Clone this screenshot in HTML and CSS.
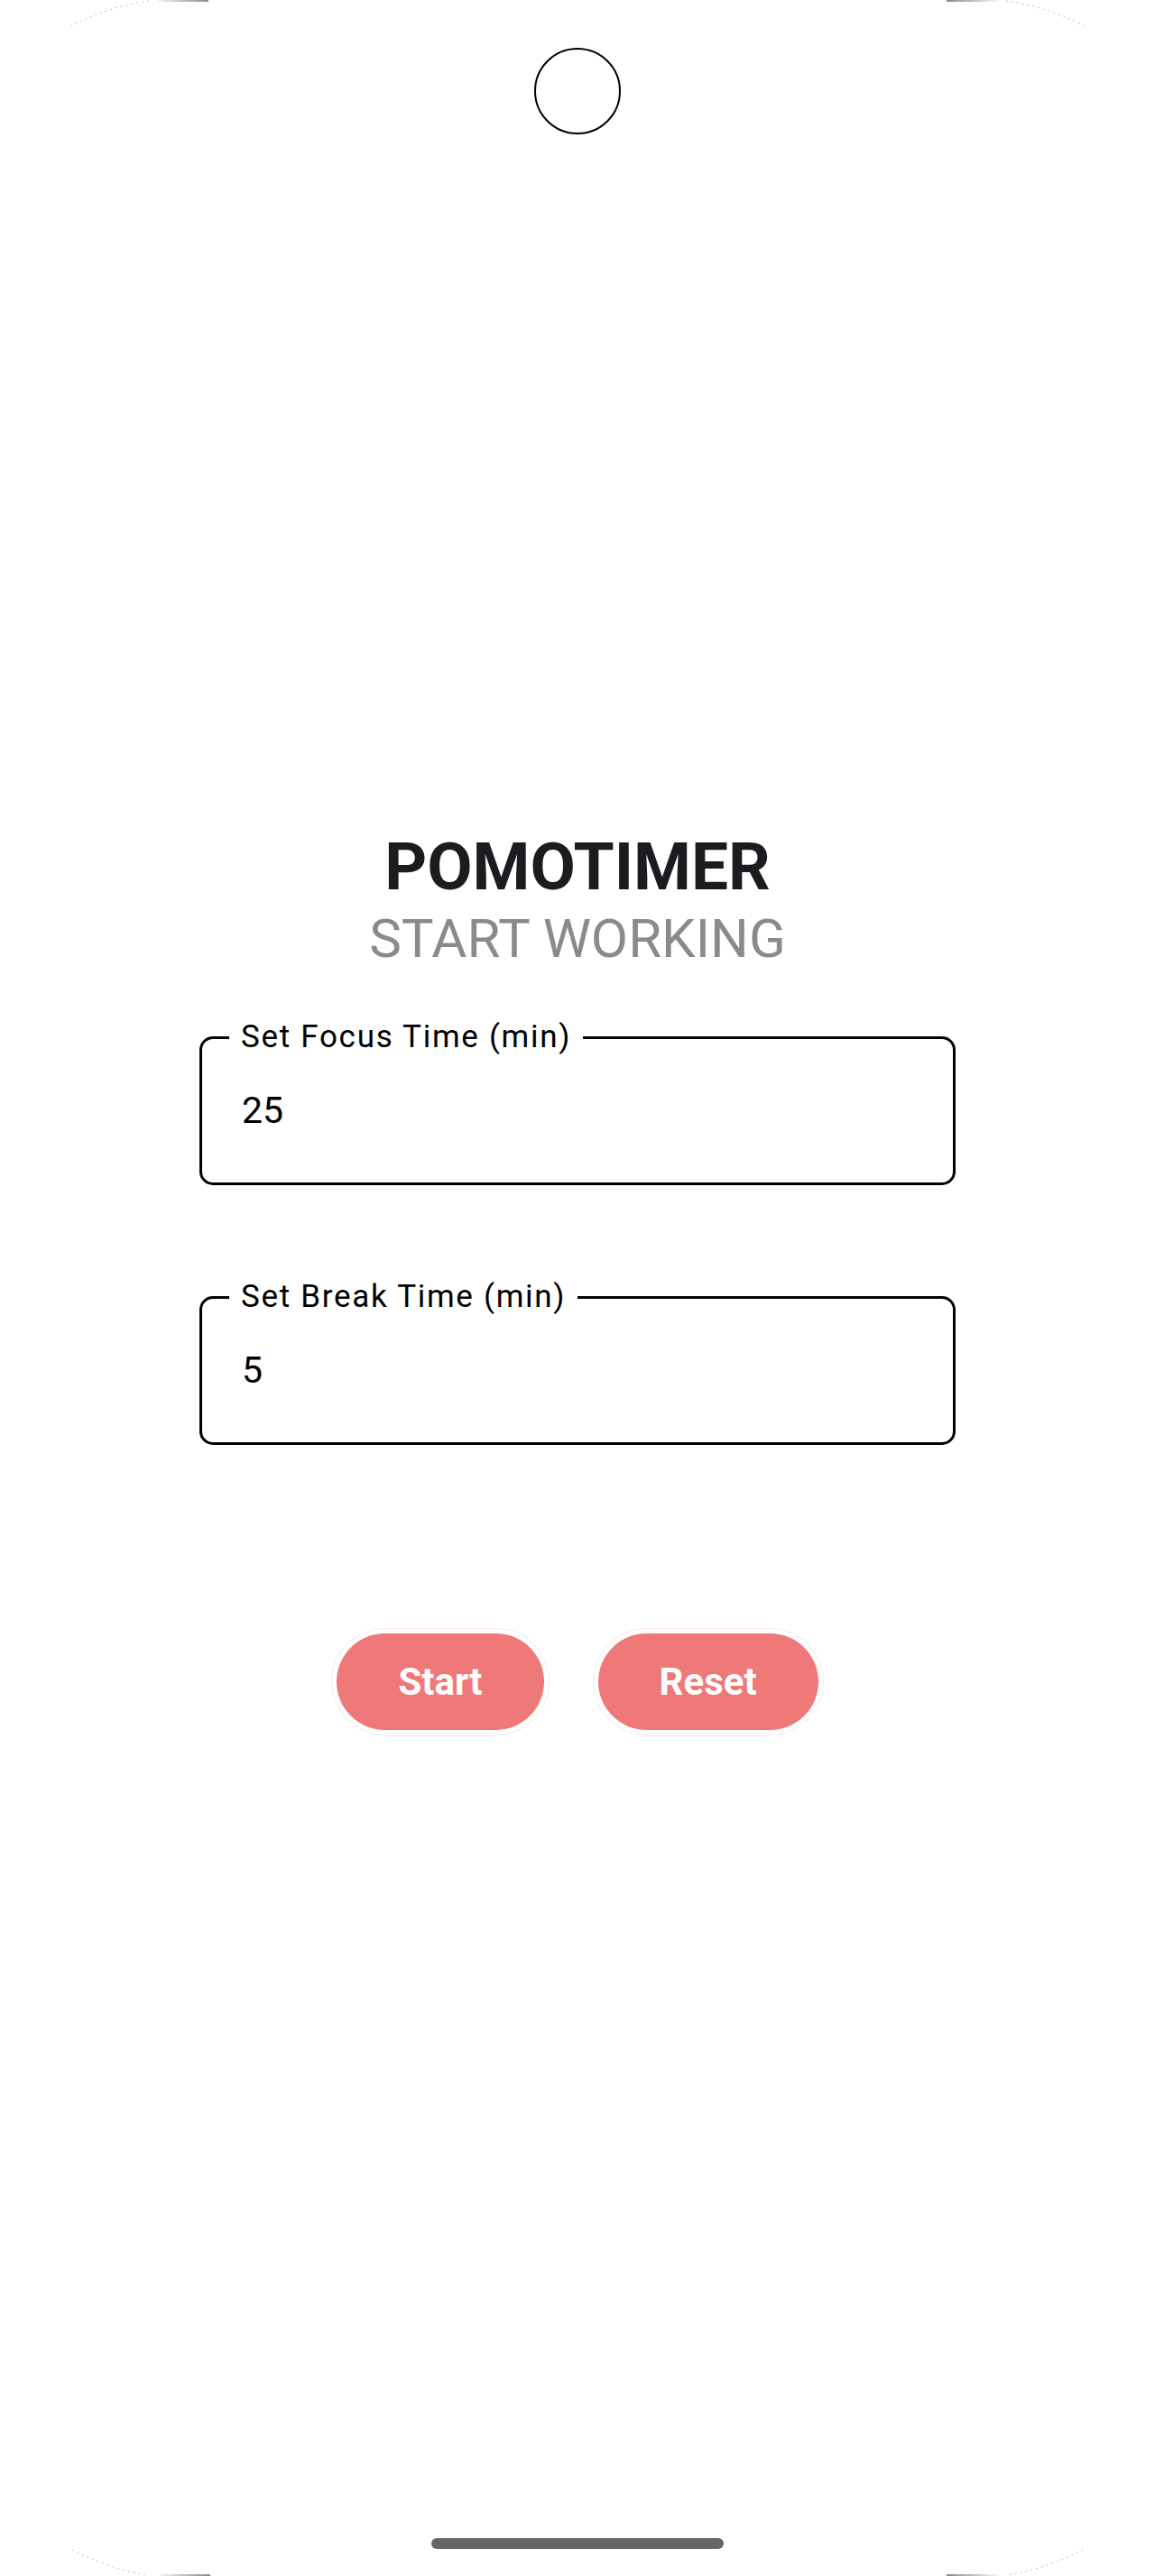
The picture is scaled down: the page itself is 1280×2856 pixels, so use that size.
FILE: index.html
```html
<!DOCTYPE html>
<html lang="en">
<head>
<meta charset="utf-8">
<title>Pomotimer</title>
<link rel="stylesheet" href="styles.css">
</head>
<body>
<div class="screen">
  <svg class="corners" width="1280" height="2856" viewBox="0 0 1280 2856" aria-hidden="true">
    <path d="M78 29 A271 271 0 0 1 165 1" />
    <path d="M1202 29 A271 271 0 0 0 1115 1" />
    <path d="M80 2827 A271 271 0 0 0 165 2855" />
    <path d="M1200 2827 A271 271 0 0 1 1115 2855" />
  </svg>
  <div class="edge edge-tl"></div>
  <div class="edge edge-tr"></div>
  <div class="edge edge-bl"></div>
  <div class="edge edge-br"></div>

  <div class="camera"></div>

  <main class="content">
    <h1 class="title">POMOTIMER</h1>
    <p class="subtitle">START WORKING</p>

    <div class="fields">
      <div class="field">
        <span class="field-label">Set Focus Time (min)</span>
        <span class="field-value">25</span>
      </div>
      <div class="field">
        <span class="field-label">Set Break Time (min)</span>
        <span class="field-value">5</span>
      </div>
    </div>

    <div class="actions">
      <button class="btn" type="button">Start</button>
      <button class="btn" type="button">Reset</button>
    </div>
  </main>

  <div class="home-bar"></div>
</div>
</body>
</html>
```

FILE: styles.css
```css
html, body {
  margin: 0;
  padding: 0;
  background: #ffffff;
}

body {
  font-family: Roboto, "Liberation Sans", Arial, sans-serif;
  color: #000;
}

.screen {
  position: relative;
  width: 1280px;
  height: 2856px;
  display: flex;
  flex-direction: column;
  align-items: center;
  overflow: hidden;
  background: #fff;
}

.corners {
  position: absolute;
  left: 0;
  top: 0;
  pointer-events: none;
}

.corners path {
  fill: none;
  stroke: rgba(0, 0, 0, 0.28);
  stroke-width: 1;
  stroke-dasharray: 2 4;
}

.edge {
  position: absolute;
  height: 2px;
  width: 56px;
}

.edge-tl { top: 0; left: 175px; background: linear-gradient(90deg, rgba(0,0,0,0.05), rgba(0,0,0,0.45)); }
.edge-tr { top: 0; left: 1049px; background: linear-gradient(90deg, rgba(0,0,0,0.45), rgba(0,0,0,0.05)); }
.edge-bl { bottom: 0; left: 177px; background: linear-gradient(90deg, rgba(0,0,0,0.05), rgba(0,0,0,0.45)); }
.edge-br { bottom: 0; left: 1049px; background: linear-gradient(90deg, rgba(0,0,0,0.45), rgba(0,0,0,0.05)); }

.camera {
  margin-top: 53px;
  width: 96px;
  height: 96px;
  box-sizing: border-box;
  border: 2.5px solid #000;
  border-radius: 50%;
  flex: none;
}

.content {
  margin-top: 769px;
  display: flex;
  flex-direction: column;
  align-items: center;
}

.title {
  margin: 0;
  font-size: 73px;
  line-height: 86px;
  font-weight: 700;
  color: #1c1b1f;
}

.subtitle {
  margin: 0;
  font-size: 60px;
  line-height: 74px;
  font-weight: 400;
  color: #8a8a8a;
}

.fields {
  margin-top: 71px;
  display: flex;
  flex-direction: column;
  gap: 123px;
}

.field {
  position: relative;
  width: 838px;
  height: 165px;
  box-sizing: border-box;
  border: 3px solid #000;
  border-radius: 15px;
  display: flex;
  align-items: center;
  padding-left: 44px;
}

.field-label {
  position: absolute;
  left: 30px;
  top: -3px;
  transform: translateY(-50%);
  padding: 0 13px;
  background: #fff;
  font-size: 35px;
  line-height: 1;
  letter-spacing: 1.7px;
  color: #000;
  white-space: nowrap;
}

.field-value {
  font-size: 41px;
  line-height: 1;
  color: #000;
}

.actions {
  margin-top: 209px;
  display: flex;
  gap: 60px;
}

.btn {
  height: 107px;
  padding: 0 68px;
  border: none;
  border-radius: 54px;
  background: #ef7878;
  color: #fff;
  font-family: Roboto, "Liberation Sans", Arial, sans-serif;
  font-size: 42px;
  font-weight: 700;
  box-shadow: 0 0 0 5px #fff, 0 0 0 6px rgba(239, 120, 120, 0.18);
  cursor: pointer;
}

.home-bar {
  margin-top: auto;
  margin-bottom: 30px;
  width: 324px;
  height: 12px;
  border-radius: 6px;
  background: #666666;
  flex: none;
}
```
